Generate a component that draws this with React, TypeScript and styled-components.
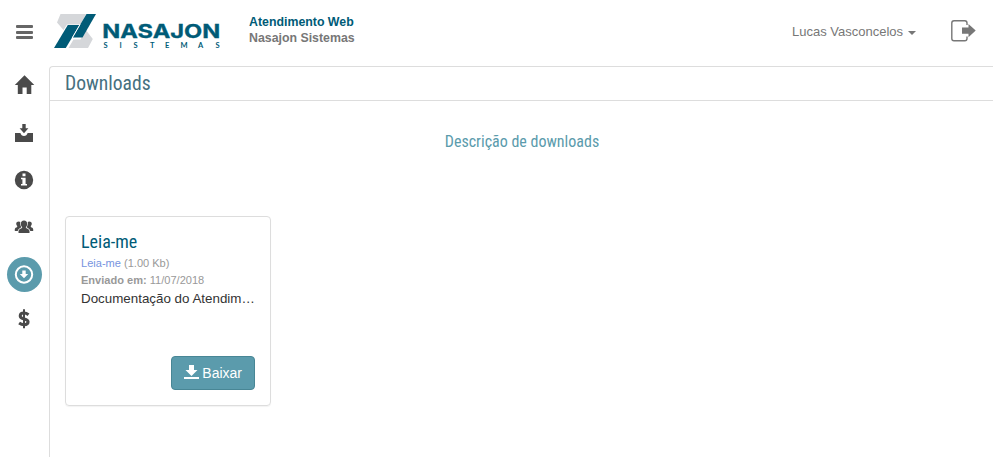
import React from "react";
import styled, { createGlobalStyle, css } from "styled-components";

const Global = createGlobalStyle`
  *, *::before, *::after { box-sizing: border-box; }
  html, body, #root { height: 100%; }
  body {
    margin: 0;
    overflow: hidden;
    background: #fff;
    color: #333;
    font: 13px/1.42857 "Liberation Sans", Arial, sans-serif;
  }
`;

const condensed = css`
  font-family: "Roboto Condensed", Roboto, sans-serif;
  font-stretch: 75%;
  font-weight: 400;
`;

const Page = styled.div`
  display: flex;
  flex-direction: column;
  height: 100vh;
`;

const Header = styled.header`
  display: flex;
  align-items: flex-start;
  flex: 0 0 66px;
`;

const MenuButton = styled.button`
  display: flex;
  flex-direction: column;
  justify-content: space-between;
  width: 17px;
  height: 14px;
  margin: 25px 20px 0 16px;
  padding: 0;
  border: 0;
  background: none;
`;

const MenuBar = styled.span`
  width: 17px;
  height: 3px;
  border-radius: 1px;
  background: #666;
`;

const Logo = styled.svg`
  display: block;
  width: 168px;
  height: 38px;
  margin-top: 12px;
  overflow: visible;
`;

const Heading = styled.div`
  margin: 14px 0 0 28px;
  font-weight: 700;
  font-size: 12.35px;
  line-height: 16px;
`;

const HeadingLine = styled.div<{ $color: string }>`
  color: ${(p) => p.$color};
`;

const UserMenu = styled.div`
  display: flex;
  align-items: center;
  margin: 22px 34px 0 auto;
  line-height: 19px;
  color: #777;
`;

const Caret = styled.span`
  margin: 3px 0 0 5px;
  border: 4px solid transparent;
  border-top-color: #777;
  border-bottom: 0;
`;

const ExitIcon = styled.svg`
  display: block;
  width: 26px;
  height: 24px;
  margin: 19px 17px 0 0;
`;

const Body = styled.div`
  display: flex;
  flex: 1;
  min-height: 0;
`;

const Sidebar = styled.nav`
  display: flex;
  flex-direction: column;
  align-items: center;
  gap: 12px;
  flex: 0 0 49px;
  padding-top: 2px;
  color: #4a4a4a;
`;

const NavItem = styled.a<{ $active?: boolean; $shift?: number }>`
  display: flex;
  align-items: center;
  width: 35px;
  height: 35px;
  margin-top: ${(p) => p.$shift ?? 0}px;
  padding-left: 7px;
  border-radius: 50%;
  color: ${(p) => (p.$active ? "#fff" : "inherit")};
  background: ${(p) => (p.$active ? "#5b9bac" : "none")};
`;

const NavIcon = styled.svg`
  display: block;
  width: 20px;
  height: 20px;
  fill: currentColor;
  overflow: visible;
`;

const Main = styled.main`
  flex: 1;
  border: 1px solid #ddd;
  border-width: 1px 0 0 1px;
  border-top-left-radius: 4px;
`;

const TitleBar = styled.div`
  height: 34px;
  padding: 0 15px;
  border-bottom: 1px solid #ddd;
`;

const Title = styled.h1`
  ${condensed}
  margin: 0;
  font-size: 19.6px;
  line-height: 34px;
  color: #46707f;
`;

const Description = styled.p`
  ${condensed}
  margin: 30px 0 0;
  padding-left: 1px;
  font-size: 16px;
  line-height: 22px;
  text-align: center;
  color: #5b9bac;
`;

const Card = styled.article`
  display: flex;
  flex-direction: column;
  width: 206px;
  height: 190px;
  margin: 63px 0 0 15px;
  padding: 15px;
  border: 1px solid #ddd;
  border-radius: 4px;
  box-shadow: 0 1px 1px rgba(0, 0, 0, 0.05);
`;

const CardTitle = styled.h2`
  ${condensed}
  margin: 0 0 1px;
  font-size: 18px;
  line-height: 20px;
  color: #005b77;
`;

const Meta = styled.div`
  margin-top: 3px;
  font-size: 11.05px;
  line-height: 14px;
  color: #999;
`;

const FileLink = styled.a`
  color: #7694e0;
`;

const Summary = styled.div`
  overflow: hidden;
  margin-top: 2px;
  font-size: 13.36px;
  line-height: 19px;
  white-space: nowrap;
  text-overflow: ellipsis;
`;

const DownloadButton = styled.button`
  display: flex;
  align-items: center;
  align-self: flex-end;
  gap: 3px;
  height: 34px;
  margin-top: auto;
  padding: 0 12px;
  border: 1px solid #488695;
  border-radius: 4px;
  background: #5b9bac;
  color: #fff;
  font: 14px/20px "Liberation Sans", Arial, sans-serif;
`;

const ButtonIcon = styled.svg`
  display: block;
  width: 15px;
  height: 16px;
  margin-top: -2px;
  fill: currentColor;
`;

const icons: { name: string; active?: boolean; shift?: number; art: React.ReactNode }[] = [
  {
    name: "Início",
    art: <path d="M10.500 -.8 L20.300 9 H17.300 V18 H12.700 V11.500 H8.500 V18 H3.800 V9 H.8 Z" />,
  },
  {
    name: "Solicitações",
    art: <path d="M8.3 1h3.4v4.3h2.7L10 10.2 5.6 5.3h2.7zM1 10h5.4c.5 1.8 1.8 3.1 3.6 3.1s3.1-1.3 3.6-3.1H19v9H1z" />,
  },
  {
    name: "Informações",
    art: (
      <path
        fillRule="evenodd"
        d="M10 .8a9.2 9.2 0 1 0 0 18.4A9.2 9.2 0 0 0 10 .8zM8.5 3.4h3v2.8h-3zM7 7.7h4.6v6.2H13v1.6H7v-1.6h1.4V9.3H7z"
      />
    ),
  },
  {
    name: "Usuários",
    art: (
      <>
        <path d="M10 3.500c2.100 0 3.200 1.400 3.200 3.400 0 1.400-.6 2.400-1.300 3.100v1c1.600.7 3.600 1.400 3.600 3.200v1.900h-11v-1.900c0-1.800 2-2.500 3.600-3.200v-1c-.7-.7-1.300-1.700-1.300-3.100 0-2 1.100-3.400 3.200-3.400z" />
        <path d="M4.800 4.600c.6 0 1.100.2 1.500.5-.5 2 .1 3.800 1.100 5.100-1.600.8-3.300 1.700-3.700 3.900H.8v-1.900c0-1.400 1.400-1.700 2.400-2.300v-.8c-.6-.6-1-1.400-1-2.300 0-1.300 1.200-2.200 2.600-2.200zM15.200 4.600c-.6 0-1.100.2-1.500.5.500 2-.1 3.800-1.100 5.100 1.600.8 3.300 1.700 3.700 3.900h2.900v-1.900c0-1.400-1.400-1.700-2.400-2.300v-.8c.6-.6 1-1.400 1-2.300 0-1.300-1.200-2.200-2.600-2.200z" />
      </>
    ),
  },
  {
    name: "Downloads",
    active: true,
    shift: 1,
    art: (
      <>
        <circle cx="10" cy="9.500" r="8.200" fill="none" stroke="currentColor" strokeWidth="2" />
        <path d="M8.300 5.500h3.400v3.400h2.500L10 13.300 5.800 8.900h2.500z" />
      </>
    ),
  },
  {
    name: "Financeiro",
    shift: -3,
    art: (
      <>
        <path d="M9 .3h2v19H9z" />
        <path
          d="M14.500 5.800C13.200 4.800 11.700 4.100 10 4.100c-2.300 0-3.800 1-3.800 2.800 0 4.100 7.900 2 7.900 5.900 0 1.900-1.700 2.900-4 2.900-1.900 0-3.600-.7-5-1.700"
          fill="none"
          stroke="currentColor"
          strokeWidth="3"
        />
      </>
    ),
  },
];

function NasajonLogo() {
  return (
    <Logo viewBox="53 12 168 38" role="img" aria-label="Nasajon Sistemas">
      <path d="M60.500 14H86L80.500 24.500H67L63.500 30 57 22.500Z" fill="#d5d7da" />
      <path d="M85.500 29.500L92.800 39 88 48H68.500L73.500 39.500H80.500Z" fill="#d5d7da" />
      <path d="M67.800 25H79.500L65.800 48H54Z" fill="#005b77" />
      <path d="M86.500 14H96L82.500 37.500H72.500Z" fill="#005b77" />
      <path d="M80 24.500L72.200 38" fill="none" stroke="#fff" strokeWidth="1" />
      <text
        x="102.300"
        y="38.300"
        fill="#005b77"
        stroke="#005b77"
        strokeWidth=".3"
        fontFamily="Inter, sans-serif"
        fontWeight="700"
        fontSize="19.300"
        textLength="118"
        lengthAdjust="spacingAndGlyphs"
      >
        NASAJON
      </text>
      <text
        x="103.500 119.500 133.500 150 165 180.500 198 215.500"
        y="48"
        fill="#005b77"
        fontFamily="Lato, sans-serif"
        fontWeight="700"
        fontSize="7.500"
      >
        SISTEMAS
      </text>
    </Logo>
  );
}

export default function App() {
  return (
    <>
      <Global />
      <Page>
        <Header>
          <MenuButton aria-label="Menu">
            <MenuBar />
            <MenuBar />
            <MenuBar />
          </MenuButton>
          <NasajonLogo />
          <Heading>
            <HeadingLine $color="#005b77">Atendimento Web</HeadingLine>
            <HeadingLine $color="#777">Nasajon Sistemas</HeadingLine>
          </Heading>
          <UserMenu>
            Lucas Vasconcelos
            <Caret />
          </UserMenu>
          <ExitIcon viewBox="0 0 26 24">
            <path
              d="M17 6V4Q17 1.800 14.800 1.800H4Q1.800 1.800 1.800 4V19.500Q1.800 21.700 4 21.700H14.800Q17 21.700 17 19.500V17.500"
              fill="none"
              stroke="#777"
              strokeWidth="1.400"
            />
            <path d="M12 8.500H18.500V5L25.700 11.600 18.500 18.200V14.700H12Z" fill="#777" />
          </ExitIcon>
        </Header>
        <Body>
          <Sidebar>
            {icons.map((i) => (
              <NavItem key={i.name} aria-label={i.name} $active={i.active} $shift={i.shift}>
                <NavIcon viewBox="0 0 20 20">{i.art}</NavIcon>
              </NavItem>
            ))}
          </Sidebar>
          <Main>
            <TitleBar>
              <Title>Downloads</Title>
            </TitleBar>
            <Description>Descrição de downloads</Description>
            <Card>
              <CardTitle>Leia-me</CardTitle>
              <Meta>
                <FileLink>Leia-me</FileLink> (1.00 Kb)
              </Meta>
              <Meta>
                <b>Enviado em:</b> 11/07/2018
              </Meta>
              <Summary>Documentação do Atendimento Web</Summary>
              <DownloadButton>
                <ButtonIcon viewBox="0 0 15 16">
                  <path d="M5 1h5v5h3.500l-6 6-6-6H5zM0 13h15v2H0z" />
                </ButtonIcon>
                Baixar
              </DownloadButton>
            </Card>
          </Main>
        </Body>
      </Page>
    </>
  );
}
